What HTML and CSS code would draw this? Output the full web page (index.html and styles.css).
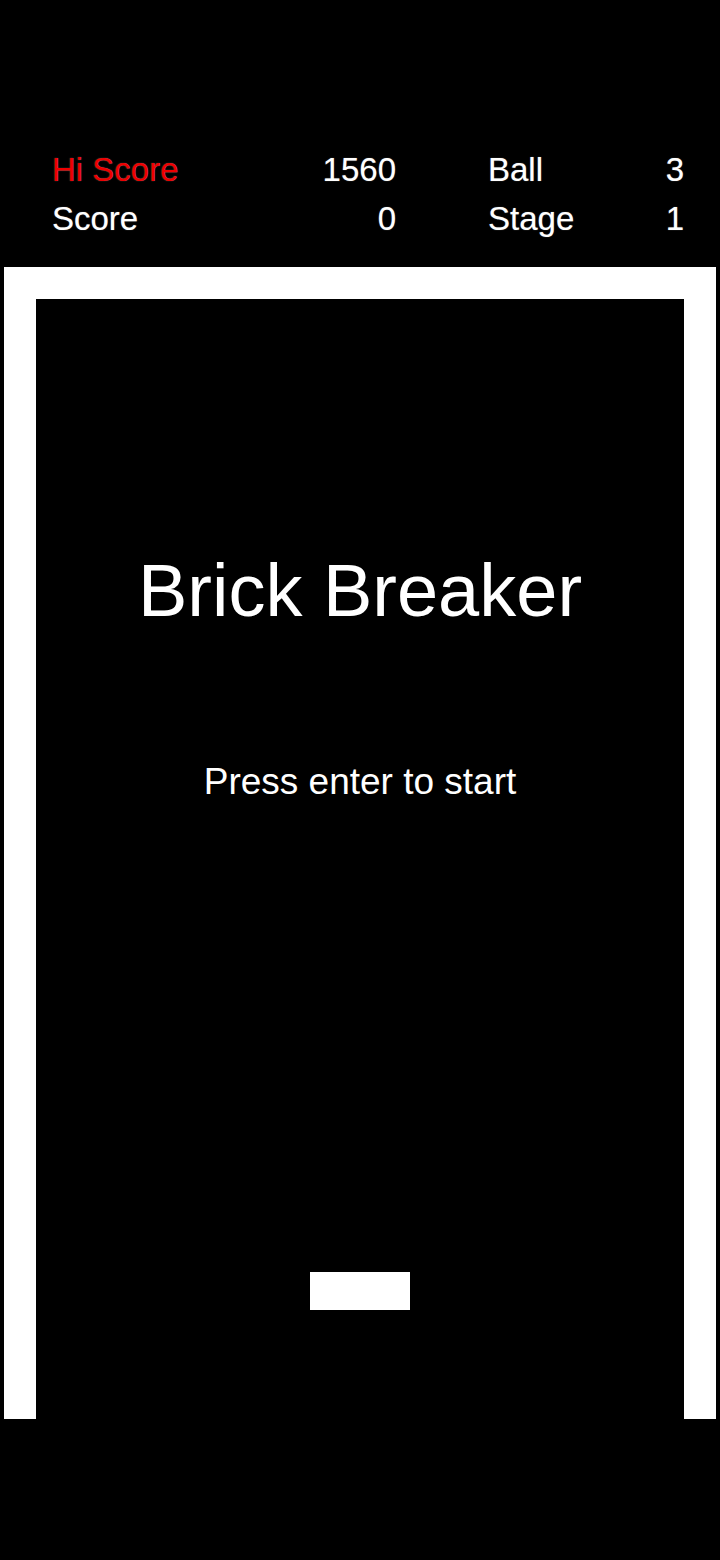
FILE: index.html
```html
<!DOCTYPE html>
<html>
<head>
<meta charset="utf-8">
<link rel="stylesheet" href="styles.css">
</head>
<body>
<div class="hud">
  <div class="label red">Hi Score</div>
  <div class="value">1560</div>
  <div class="label second">Ball</div>
  <div class="value">3</div>
  <div class="label">Score</div>
  <div class="value">0</div>
  <div class="label second">Stage</div>
  <div class="value">1</div>
</div>
<div class="frame">
  <div class="field">
    <div class="title">Brick Breaker</div>
    <div class="prompt">Press enter to start</div>
    <div class="paddle"></div>
  </div>
</div>
</body>
</html>
```

FILE: styles.css
```css
html, body {
  margin: 0;
  padding: 0;
  background: #000;
}
body {
  width: 720px;
  height: 1560px;
  font-family: "Liberation Sans", Arial, sans-serif;
  color: #fff;
  overflow: hidden;
}
.hud {
  display: grid;
  grid-template-columns: 172px 172px 193px 95px;
  padding-top: 145px;
  padding-left: 52px;
  font-size: 33px;
  line-height: 49px;
  white-space: nowrap;
}
.hud > div {
  text-shadow: 0 0 1px rgba(160, 160, 160, 0.8);
}
.label {
  text-align: left;
}
.label.second {
  padding-left: 92px;
}
.value {
  text-align: right;
}
.red {
  color: #ee0000;
}
.frame {
  margin-top: 24px;
  margin-left: 4px;
  width: 648px;
  height: 1120px;
  border: 32px solid #fff;
  border-bottom: 0;
  background: #000;
}
.field {
  display: flex;
  flex-direction: column;
  align-items: center;
  height: 100%;
}
.title {
  margin-top: 255px;
  font-size: 74px;
  line-height: 74px;
}
.prompt {
  margin-top: 135px;
  font-size: 37px;
  line-height: 37px;
}
.paddle {
  margin-top: 472px;
  width: 100px;
  height: 38px;
  background: #fff;
}
```
